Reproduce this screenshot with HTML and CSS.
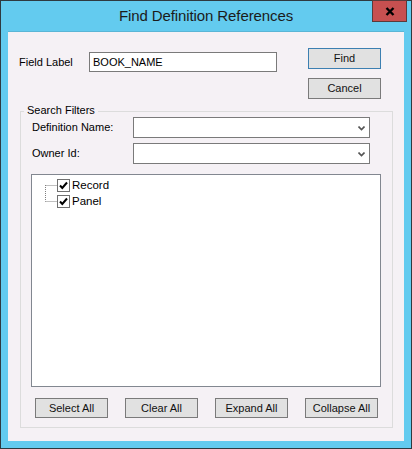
FILE: index.html
```html
<!DOCTYPE html>
<html lang="en">
<head>
    <meta charset="UTF-8">
    <title>Find Definition References</title>
    <link rel="stylesheet" href="styles.css">
</head>
<body>
<div class="window">
    <div class="titlebar">
        <span class="title">Find Definition References</span>
        <button class="close" type="button">
            <svg width="10" height="9" viewBox="0 0 10 9"><path d="M1.5 1 L8.5 8 M8.5 1 L1.5 8" stroke="#000" stroke-width="2.4" fill="none"/></svg>
        </button>
    </div>
    <div class="client">
        <!--字段名称和右侧的两个按钮-->
        <div class="top">
            <label class="fieldLabel">Field Label</label>
            <div class="textbox">BOOK_NAME</div>
            <div class="actions">
                <button class="btn btnDefault" type="button">Find</button>
                <button class="btn" type="button">Cancel</button>
            </div>
        </div>
        <!--Search Filters分组框-->
        <div class="group">
            <span class="legend">Search Filters</span>
            <div class="row">
                <label>Definition Name:</label>
                <div class="combo">
                    <svg class="chevron" width="7" height="5" viewBox="0 0 7 5"><path d="M0.5 0.5 L3.5 3.5 L6.5 0.5" stroke="#555" stroke-width="1.6" fill="none"/></svg>
                </div>
            </div>
            <div class="row">
                <label>Owner Id:</label>
                <div class="combo">
                    <svg class="chevron" width="7" height="5" viewBox="0 0 7 5"><path d="M0.5 0.5 L3.5 3.5 L6.5 0.5" stroke="#555" stroke-width="1.6" fill="none"/></svg>
                </div>
            </div>
            <div class="tree">
                <ul>
                    <li>
                        <svg class="lines" width="12" height="16" viewBox="0 0 12 16"><path d="M0.5 8 V16 M0.5 8.5 H12" stroke="#808080" stroke-dasharray="1 1" fill="none"/></svg>
                        <svg class="check" width="13" height="13" viewBox="0 0 13 13"><rect x="0.5" y="0.5" width="12" height="12" fill="#fff" stroke="#707070"/><path d="M3 6.5 L5.3 9 L10 3.5" stroke="#000" stroke-width="2" fill="none"/></svg>
                        <span>Record</span>
                    </li>
                    <li>
                        <svg class="lines" width="12" height="16" viewBox="0 0 12 16"><path d="M0.5 0 V8.5 M0.5 8.5 H12" stroke="#808080" stroke-dasharray="1 1" fill="none"/></svg>
                        <svg class="check" width="13" height="13" viewBox="0 0 13 13"><rect x="0.5" y="0.5" width="12" height="12" fill="#fff" stroke="#707070"/><path d="M3 6.5 L5.3 9 L10 3.5" stroke="#000" stroke-width="2" fill="none"/></svg>
                        <span>Panel</span>
                    </li>
                </ul>
            </div>
            <div class="buttons">
                <button class="btn" type="button">Select All</button>
                <button class="btn" type="button">Clear All</button>
                <button class="btn" type="button">Expand All</button>
                <button class="btn" type="button">Collapse All</button>
            </div>
        </div>
    </div>
</div>
</body>
</html>
```

FILE: styles.css
```css
* {
    margin: 0;
    padding: 0;
    box-sizing: border-box;
    font-family: "Liberation Sans", Arial, sans-serif;
    font-size: 11px;
    font-weight: normal;
    color: #000;
}
ul, li {
    list-style: none;
}
body {
    width: 412px;
    height: 449px;
    overflow: hidden;
}
.window {
    width: 412px;
    height: 449px;
    background: #63cbef;
    border: 1px solid #2e3a40;
    display: flex;
    flex-direction: column;
}
.titlebar {
    position: relative;
    height: 30px;
    display: flex;
    justify-content: center;
    align-items: center;
}
.title {
    font-size: 15px;
    color: #1b1b1b;
    letter-spacing: -0.1px;
    margin-top: -2px;
}
.close {
    position: absolute;
    top: -1px;
    right: 4px;
    width: 35px;
    height: 22px;
    background: #c75050;
    border: 1px solid #5b3a3a;
    display: flex;
    align-items: center;
    justify-content: center;
}
.client {
    flex: 1;
    margin: 0 7px 7px;
    background: #f5f1f5;
    border-top: 1px solid #5ab6d6;
    padding: 16px 11px 0 11px;
}
/*上半部分:标签、文本框、按钮*/
.top {
    display: flex;
    height: 51px;
}
.fieldLabel {
    width: 70px;
    margin-top: 4px;
    line-height: 20px;
}
.textbox {
    width: 188px;
    height: 20px;
    margin-top: 4px;
    background: #fff;
    border: 1px solid #7a7a7a;
    padding-left: 3px;
    line-height: 18px;
}
.actions {
    margin-left: 31px;
    display: flex;
    flex-direction: column;
    gap: 9px;
}
.btn {
    width: 73px;
    height: 21px;
    background: #e1e1e1;
    border: 1px solid #7a7a7a;
    line-height: 19px;
    text-align: center;
    color: #111;
}
.btnDefault {
    border-color: #3c7fb1;
}
/*分组框*/
.group {
    position: relative;
    margin: 12px 0 0 1px;
    width: 373px;
    height: 317px;
    border: 1px solid #dcdcdc;
    padding: 5px 0 0 10px;
}
.legend {
    position: absolute;
    top: -9px;
    left: 3px;
    padding: 0 3px;
    line-height: 14px;
    background: #f5f1f5;
}
.row {
    display: flex;
    height: 21px;
    margin-bottom: 5px;
}
.row label {
    width: 102px;
    padding-left: 1px;
    line-height: 21px;
}
.combo {
    position: relative;
    width: 237px;
    height: 21px;
    background: #fff;
    border: 1px solid #7a7a7a;
}
.chevron {
    position: absolute;
    right: 4px;
    top: 8px;
}
.tree {
    width: 350px;
    height: 213px;
    margin-top: 10px;
    background: #fff;
    border: 1px solid #828790;
    padding: 2px 0 0 13px;
}
.tree li {
    display: flex;
    align-items: center;
    height: 16px;
}
.tree .lines {
    display: block;
}
.tree .check {
    display: block;
    margin-right: 2px;
}
.tree span {
    font-size: 11.5px;
}
.buttons {
    display: flex;
    justify-content: space-between;
    width: 343px;
    margin: 11px 0 0 4px;
}
.buttons .btn {
    height: 20px;
    line-height: 18px;
}
```
